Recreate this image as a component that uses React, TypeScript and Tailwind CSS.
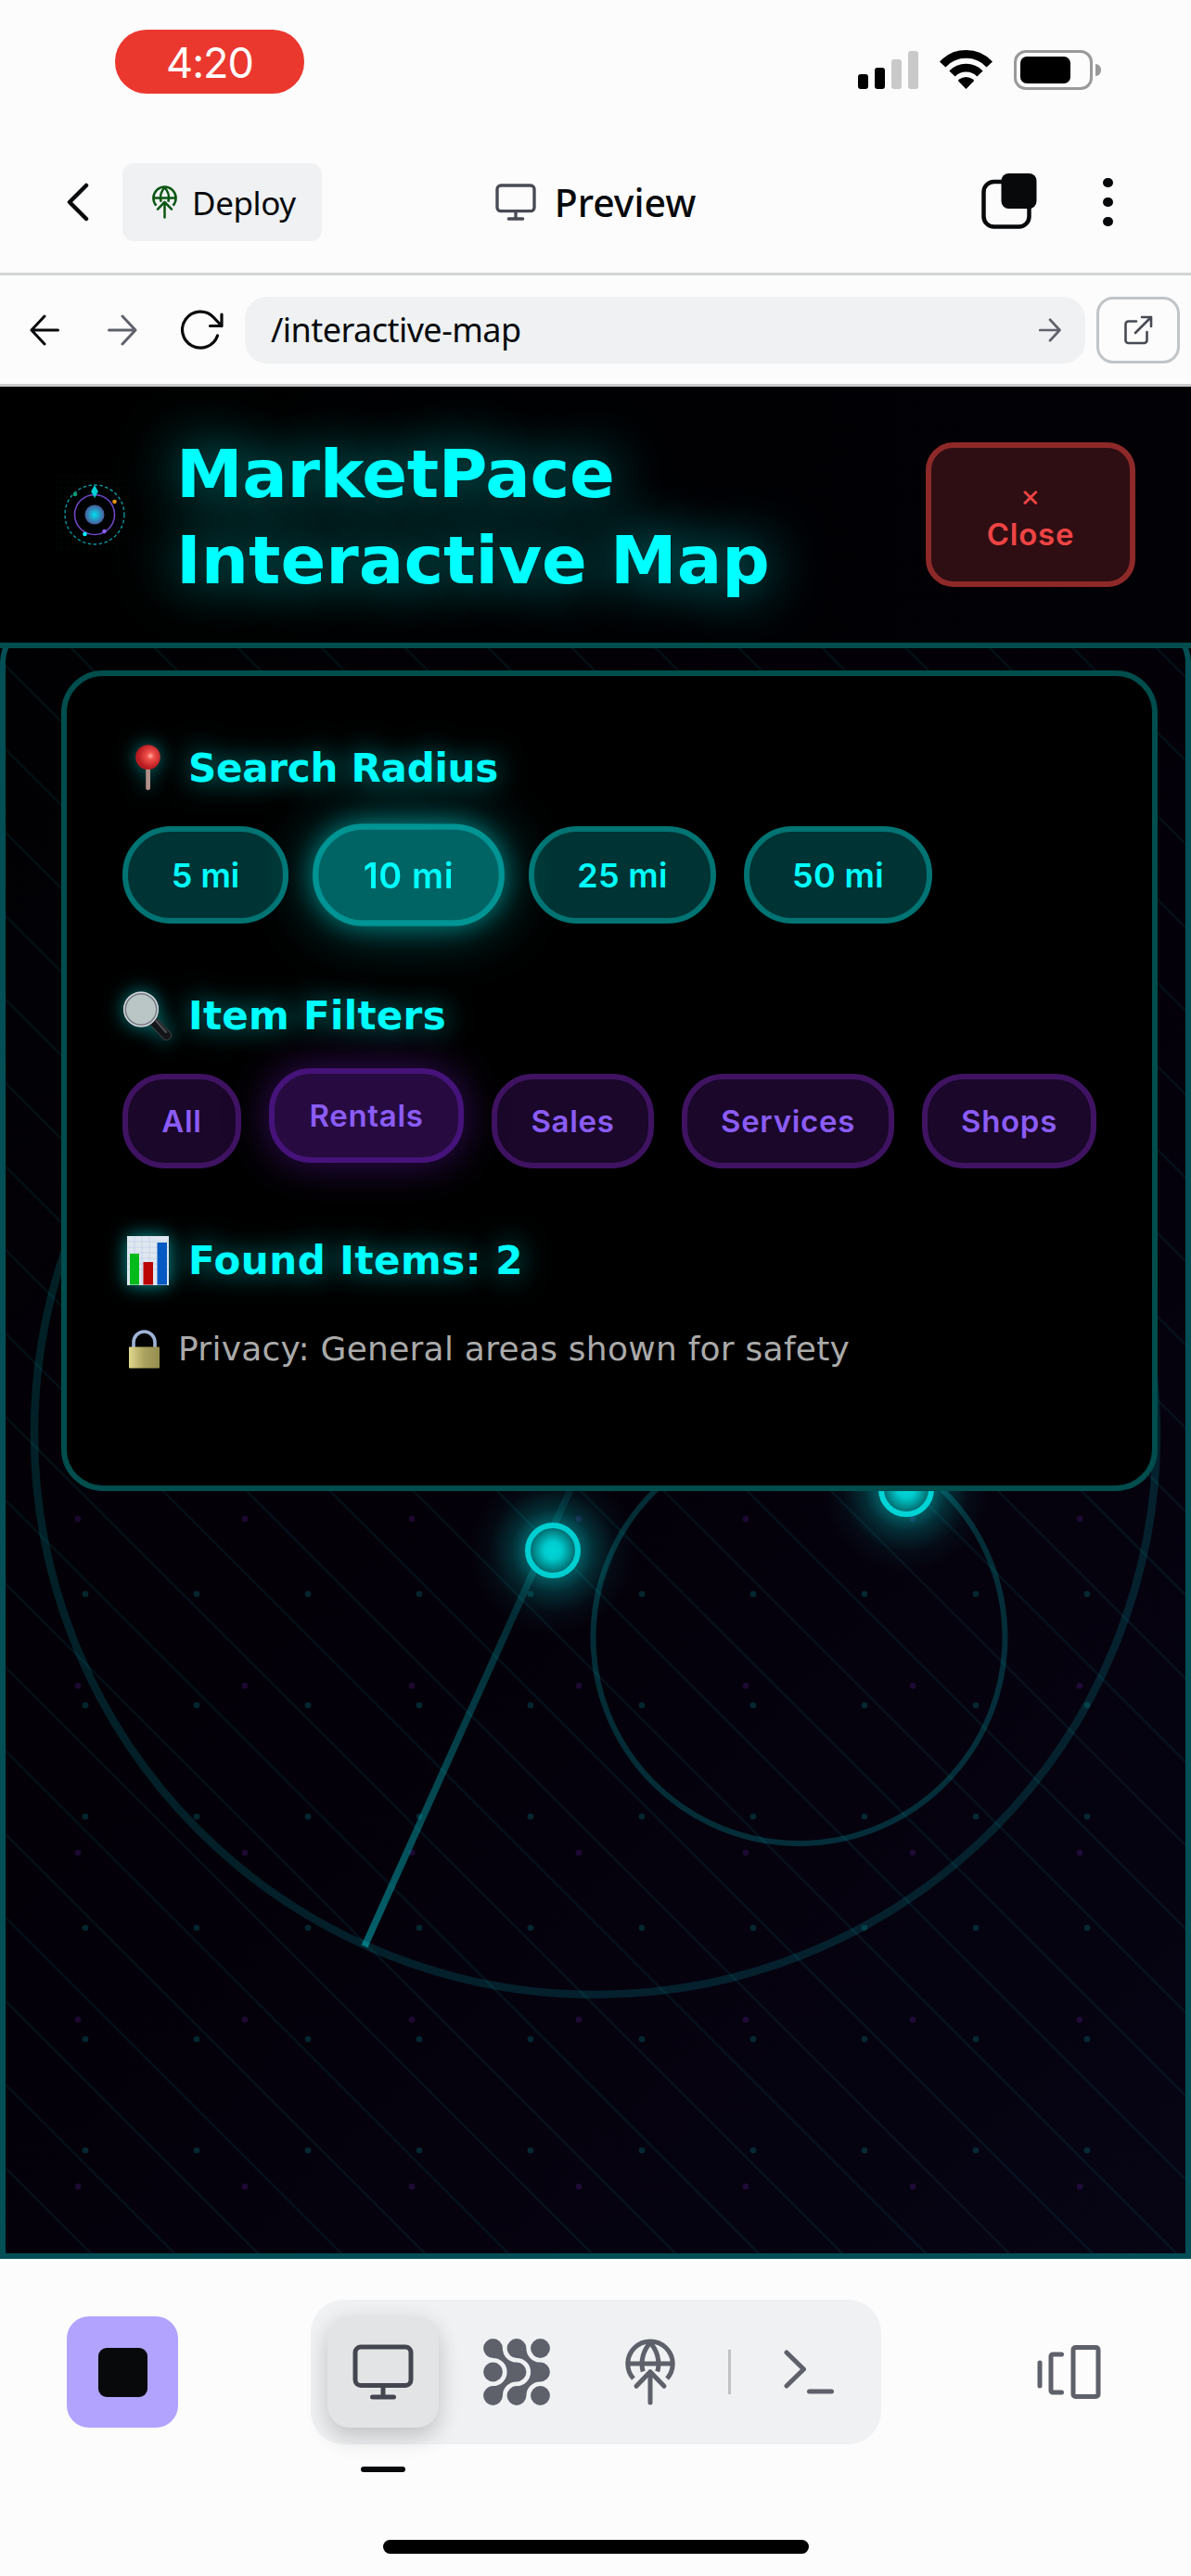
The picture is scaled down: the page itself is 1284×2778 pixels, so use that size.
function GlobeUp({ className }: { className: string }) {
  return (
    <svg viewBox="0 0 54 72" className={className} fill="none" stroke="currentColor" strokeWidth="5" strokeLinejoin="round">
      <path d="M8.9 43.2A24.2 24.2 0 1 1 45.1 43.2" />
      <path d="M3 27h48M19.2 35.5C16 24 20 12 27 4.5C34 12 38 24 34.8 35.5" />
      <path d="M12 51.3 27 35.7 42 51.3M27 36.5V69" strokeLinecap="round" />
    </svg>
  )
}

function Monitor({ className }: { className: string }) {
  return (
    <svg viewBox="0 0 66 60" className={className} fill="none" stroke="currentColor" strokeWidth="5" strokeLinecap="round">
      <rect x="3" y="3" width="60" height="41.5" rx="6" />
      <path d="M33 44.5v12M21.5 57h23" />
    </svg>
  )
}

function Arrow({ className }: { className: string }) {
  return (
    <svg viewBox="0 0 32 34" className={className} fill="none" stroke="currentColor" strokeLinecap="round" strokeLinejoin="round">
      <path d="M1.5 17H30M16 2 30 17 16 32" />
    </svg>
  )
}

function StatusBar() {
  return (
    <div className="flex h-[142px] items-start justify-between pl-[124px] pr-[97px]">
      <div className="mt-8 flex h-[69px] w-[204px] items-center justify-center rounded-[34px] bg-[#eb382f] text-[45px] tracking-[-1px] text-white">
        <span className="pt-0.5">4:20</span>
      </div>
      <div className="mt-[54px] flex items-end">
        <div className="flex items-end gap-[7px] pb-px">
          <div className="h-4 w-[11px] rounded-[3px] bg-black" />
          <div className="h-[23px] w-[11px] rounded-[3px] bg-black" />
          <div className="h-8 w-[11px] rounded-[3px] bg-[#c9c9c9]" />
          <div className="h-[41px] w-[11px] rounded-[3px] bg-[#c9c9c9]" />
        </div>
        <svg viewBox="0 0 57 43" className="ml-[23px] h-[43px] w-[57px]">
          <path d="M3.2 15.5A34.5 34.5 0 0 1 53.8 15.500M13.5 25.5A21 21 0 0 1 43.5 25.5" fill="none" stroke="black" strokeWidth="8.8" />
          <path d="M28.5 42 20 33.3Q20 32.3 21 31.6Q28.5 26.4 36 31.6Q37 32.3 37 33.3Z" />
        </svg>
        <div className="ml-[23px] flex h-[43px] w-[85px] items-center rounded-[13px] border-[3px] border-[#999] pl-1">
          <div className="h-[29px] w-[54px] rounded-[7px] bg-black" />
        </div>
        <div className="mb-[15px] ml-[3px] h-[13px] w-[6px] rounded-r-full bg-[#999]" />
      </div>
    </div>
  )
}

function TitleBar() {
  return (
    <div className="relative flex h-[155px] items-center border-b-[3px] border-[#d3d5d6] font-['Noto_Sans'] text-[#07090b]">
      <svg viewBox="0 0 24 42" className="ml-[72px] h-[42px] w-6" fill="none" stroke="currentColor" strokeWidth="4.5" strokeLinecap="round" strokeLinejoin="round">
        <path d="M21 3 3 21 21 39" />
      </svg>
      <div className="ml-9 flex h-[84px] w-[215px] items-center rounded-xl bg-[#eff1f3] pl-8">
        <GlobeUp className="h-9 w-[27px] text-[#0a5712]" />
        <span className="ml-4 text-[35px] leading-none tracking-[-0.4px]">Deploy</span>
      </div>
      <div className="absolute inset-x-0 flex items-center justify-center">
        <Monitor className="h-10 w-11 text-[#484a54]" />
        <span className="ml-5 text-[41px] font-medium leading-none">Preview</span>
      </div>
      <svg viewBox="0 0 60 60" className="mb-0.5 ml-auto mr-[71px] h-[60px] w-[60px]">
        <rect x="2.5" y="9" width="49" height="48.5" rx="11" fill="none" stroke="currentColor" strokeWidth="4.5" />
        <rect x="21.5" y="0" width="38" height="38" rx="8" fill="currentColor" />
      </svg>
      <div className="mr-[84px] flex flex-col gap-[10.4px]">
        <i className="size-[10.6px] rounded-full bg-current" />
        <i className="size-[10.6px] rounded-full bg-current" />
        <i className="size-[10.6px] rounded-full bg-current" />
      </div>
    </div>
  )
}

function AddressBar() {
  return (
    <div className="flex h-[120px] items-center border-b-[3px] border-[#c9cbcc] font-['Noto_Sans'] text-[#07090b]">
      <Arrow className="ml-8 h-[34px] w-8 rotate-180 stroke-[3]" />
      <Arrow className="ml-[52px] h-[34px] w-8 stroke-[3] text-[#5f626b]" />
      <svg viewBox="0 0 48 44" className="ml-[47px] h-11 w-12" fill="none" stroke="currentColor" strokeWidth="3.2" strokeLinecap="round" strokeLinejoin="round">
        <path d="M39.5 28A19.5 19.5 0 1 1 35 8L44 17.500M44 5V17.5H31.5" />
      </svg>
      <div className="ml-[21px] flex h-[72px] w-[906px] items-center justify-between rounded-3xl bg-[#eff1f3] pl-7 pr-[26px]">
        <span className="text-[36px] leading-none tracking-[-0.55px]">/interactive-map</span>
        <Arrow className="h-[26px] w-6 stroke-[3.5] text-[#5f626b]" />
      </div>
      <div className="ml-3 flex h-[72px] w-[90px] items-center justify-center rounded-[18px] border-[3px] border-[#c0c5c7]">
        <svg viewBox="0 0 32 32" className="h-8 w-8" fill="none" stroke="#484a54" strokeWidth="2.6" strokeLinecap="round" strokeLinejoin="round">
          <path d="M14 6.5H5.5A3 3 0 0 0 2.5 9.5V27A3 3 0 0 0 5.5 30H22.5A3 3 0 0 0 25.5 27V18M20 2H30V12M30 2 13 19" />
        </svg>
      </div>
    </div>
  )
}

function AppHeader() {
  return (
    <header className="relative z-10 flex h-[282px] items-center border-b-[6px] border-[#004d4d] bg-[linear-gradient(90deg,#000,#020106)]">
      <svg viewBox="0 0 84 84" className="ml-[60px] h-[84px] w-[84px] shrink-0">
        <defs>
          <radialGradient id="core">
            <stop offset="0" stopColor="#00e0f0" />
            <stop offset="1" stopColor="#4a5a9a" />
          </radialGradient>
          <pattern id="logoGrid" width="6" height="6" patternUnits="userSpaceOnUse">
            <path d="M0 0H6M0 0V6" stroke="#020807" strokeWidth="1" />
          </pattern>
        </defs>
        <rect width="84" height="84" fill="url(#logoGrid)" />
        <circle cx="42" cy="42" r="32" fill="none" stroke="#0aa0a8" strokeWidth="1.3" strokeDasharray="3.5 2.5" />
        <circle cx="42" cy="42" r="21.5" fill="none" stroke="#6f46c4" strokeWidth="1.6" />
        <circle cx="42" cy="42" r="10.5" fill="url(#core)" />
        <path d="M42 10 45.8 17 42 24 38.2 17Z" fill="#00cfd6" />
        <circle cx="21" cy="20" r="2.3" fill="#0f9a70" />
        <circle cx="63.5" cy="28" r="2.3" fill="#e8940f" />
        <circle cx="31.5" cy="63" r="2.3" fill="#00f0ff" />
        <circle cx="52.5" cy="60" r="2.3" fill="#8b5cf6" />
      </svg>
      <h1 className="ml-[46px] w-[700px] pt-1.5 font-['DejaVu_Sans'] text-[72px] font-bold leading-[93px] text-[#0ff] [text-shadow:0_0_60px_rgba(0,255,255,0.65)]">
        <span className="tracking-[-0.35px]">MarketPace</span>
        <br />
        <span>Interactive Map</span>
      </h1>
      <button className="ml-auto mr-[60px] flex h-[156px] w-[226px] flex-col items-center justify-center rounded-[30px] border-[6px] border-[#8e2929] bg-[#2e0e12] text-[33px] font-semibold leading-[40px] tracking-[0.8px] text-[#ef4444]">
        <span className="font-normal">×</span>
        <span className="pt-0.5">Close</span>
      </button>
    </header>
  )
}

function Pushpin() {
  return (
    <svg viewBox="0 0 54 60" className="h-[60px] w-[54px] overflow-visible drop-shadow-[0_0_10px_rgba(0,255,255,0.5)]">
      <defs>
        <radialGradient id="pin" cx=".6" cy=".45">
          <stop offset="0" stopColor="#ffb0a0" />
          <stop offset=".3" stopColor="#f0504a" />
          <stop offset="1" stopColor="#b81a20" />
        </radialGradient>
      </defs>
      <rect x="25.2" y="26" width="4.8" height="28" rx="2" fill="#b09088" />
      <circle cx="27.5" cy="18.5" r="13.3" fill="url(#pin)" />
    </svg>
  )
}

function Magnifier() {
  return (
    <svg viewBox="0 0 54 60" className="h-[60px] w-[54px] overflow-visible drop-shadow-[0_0_10px_rgba(0,255,255,0.5)]">
      <path d="M34 37 47.5 51.5" stroke="#3c4043" strokeWidth="11" strokeLinecap="round" />
      <path d="M34 37 47.5 51.5" stroke="#121416" strokeWidth="9" strokeLinecap="round" />
      <path d="M36.5 36 47 48" stroke="#4a4e52" strokeWidth="2.5" strokeLinecap="round" />
      <circle cx="20" cy="23.500" r="17.5" fill="#b9c6c5" stroke="#777c84" strokeWidth="3" />
      <circle cx="20" cy="23.5" r="18.3" fill="none" stroke="#d5dbe2" strokeWidth="1.4" />
    </svg>
  )
}

function BarChart() {
  return (
    <svg viewBox="0 0 54 60" className="h-[60px] w-[54px] overflow-visible drop-shadow-[0_0_10px_rgba(0,255,255,0.6)]">
      <rect x="5" y="4" width="45" height="53" fill="#dfe7f0" />
      <path d="M5 10H50M5 16H50M5 22H50M5 28H50M5 34H50M5 40H50M13 4V57M21 4V57M29 4V57" stroke="#c3d2e4" strokeWidth=".8" />
      <rect x="8" y="23" width="10" height="33.5" fill="#05bb1c" />
      <rect x="22.5" y="32" width="10.5" height="24.5" fill="#bb0404" />
      <rect x="37.5" y="11" width="10.5" height="45.5" fill="#0559c2" />
    </svg>
  )
}

function Padlock() {
  return (
    <svg viewBox="0 0 46 54" className="h-[54px] w-[46px]">
      <defs>
        <linearGradient id="lock">
          <stop offset="0" stopColor="#e0d88c" />
          <stop offset=".5" stopColor="#aaa25e" />
          <stop offset="1" stopColor="#958d50" />
        </linearGradient>
      </defs>
      <path d="M12 26V19.5A11.5 11.5 0 0 1 35 19.5V26" fill="none" stroke="#9fb3d8" strokeWidth="3.6" />
      <rect x="7" y="24.5" width="33" height="23" rx="1" fill="url(#lock)" />
    </svg>
  )
}

const heading =
  "flex h-[60px] items-center font-['DejaVu_Sans'] text-[42px] font-bold leading-[60px] text-[#0ff] [text-shadow:0_0_30px_rgba(0,255,255,0.6)]"
const radiusPill =
  'flex h-[105px] items-center justify-center rounded-[52px] border-[6px] text-[36px] font-semibold text-[#0ff]'
const filterPill =
  'flex h-[102px] items-center justify-center rounded-[45px] border-[6px] pt-0.5 text-[33px] font-semibold tracking-[0.7px] text-[#8b5cf6]'

function ControlPanel() {
  const idle = 'border-[#007373] bg-[#003333]'
  const idleFilter = 'border-[#3f1361] bg-[#1a0729]'
  return (
    <section className="absolute left-[66px] top-[24px] h-[885px] w-[1182px] rounded-[45px] border-[6px] border-[#004d4d] bg-black px-[60px] pt-[69px]">
      <h2 className={heading}>
        <Pushpin />
        <span className="ml-[17px] pt-0.5 tracking-[-0.25px]">Search Radius</span>
      </h2>
      <div className="mt-[33px] flex">
        <button className={`${radiusPill} ${idle} w-[179px]`}>5 mi</button>
        <button className={`${radiusPill} ml-[31px] w-[197px] scale-105 border-[#009494] bg-[#006464] tracking-[0.6px] shadow-[0_0_60px_rgba(0,255,255,0.4),0_0_24px_rgba(0,255,255,0.35)]`}>10 mi</button>
        <button className={`${radiusPill} ${idle} ml-[31px] w-[202px] tracking-[0.3px]`}>25 mi</button>
        <button className={`${radiusPill} ${idle} ml-[30px] w-[203px] tracking-[0.3px]`}>50 mi</button>
      </div>
      <h2 className={`${heading} mt-[69px]`}>
        <Magnifier />
        <span className="ml-[17px] pt-0.5 tracking-[0.3px]">Item Filters</span>
      </h2>
      <div className="mt-[33px] flex gap-[30px]">
        <button className={`${filterPill} ${idleFilter} w-32`}>All</button>
        <button className={`${filterPill} w-[210px] -translate-y-1.5 border-[#45137a] bg-[#270b40] shadow-[0_0_45px_rgba(110,30,190,0.5)]`}>Rentals</button>
        <button className={`${filterPill} ${idleFilter} w-[175px]`}>Sales</button>
        <button className={`${filterPill} ${idleFilter} w-[229px]`}>Services</button>
        <button className={`${filterPill} ${idleFilter} w-[188px]`}>Shops</button>
      </div>
      <h2 className={`${heading} mt-[69px]`}>
        <BarChart />
        <span className="ml-[17px] pt-0.5 tracking-[0.5px]">Found Items: 2</span>
      </h2>
      <p className="mt-[39px] flex h-[54px] items-center font-['DejaVu_Sans'] text-[36px] text-[#aaa]">
        <Padlock />
        <span className="ml-[14px] tracking-[0.25px]">Privacy: General areas shown for safety</span>
      </p>
    </section>
  )
}

function RadarMap() {
  return (
    <main className="relative h-[1737px] overflow-hidden bg-[#020006]">
      <div className="absolute inset-x-0 -top-[29px] bottom-0 overflow-hidden rounded-t-[45px] border-[6px] border-[#034f55] bg-[linear-gradient(135deg,#010103,#040009_50%,#070414)]" />
      <svg viewBox="0 699 1284 1737" className="absolute inset-0 h-[1737px] w-[1284px]">
        <defs>
          <clipPath id="frame"><rect x="6" y="699" width="1272" height="1731" /></clipPath>
          <pattern id="diagonals" x="8" y="0" width="90" height="90" patternUnits="userSpaceOnUse">
            <path d="M-5 -5 95 95M85 -5 95 5M-5 85 5 95" stroke="#00ffff" strokeOpacity=".06" strokeWidth="2.6" />
          </pattern>
          <pattern id="cyanDots" x="32" y="1659" width="120" height="120" patternUnits="userSpaceOnUse">
            <circle cx="60" cy="60" r="3.3" fill="#00ffff" fillOpacity=".15" />
          </pattern>
          <pattern id="violetDots" x="-6" y="1548" width="180" height="180" patternUnits="userSpaceOnUse">
            <circle cx="90" cy="90" r="3.3" fill="#8a2be2" fillOpacity=".18" />
          </pattern>
          <linearGradient id="sweep" gradientUnits="userSpaceOnUse" x1="642" y1="1546" x2="393" y2="2099">
            <stop offset="0" stopColor="#00d8e0" stopOpacity=".05" />
            <stop offset="1" stopColor="#00d8e0" stopOpacity=".45" />
          </linearGradient>
          <radialGradient id="marker">
            <stop offset="0" stopColor="#00d6d8" />
            <stop offset=".35" stopColor="#00cbcd" />
            <stop offset="1" stopColor="#005a5e" />
          </radialGradient>
          <radialGradient id="glow">
            <stop offset=".25" stopColor="#00ffff" stopOpacity=".42" />
            <stop offset=".5" stopColor="#00ffff" stopOpacity=".17" />
            <stop offset=".75" stopColor="#00ffff" stopOpacity=".04" />
            <stop offset="1" stopColor="#00ffff" stopOpacity="0" />
          </radialGradient>
        </defs>
        <g clipPath="url(#frame)">
          <rect y="699" width="1284" height="1737" fill="url(#diagonals)" />
          <rect y="1600" width="1284" height="836" fill="url(#cyanDots)" />
          <rect y="1600" width="1284" height="836" fill="url(#violetDots)" />
          <circle cx="642" cy="1546" r="605" fill="none" stroke="#00e0e8" strokeOpacity=".14" strokeWidth="8.5" />
          <circle cx="861.5" cy="1766" r="222" fill="none" stroke="#00e0e8" strokeOpacity=".2" strokeWidth="6" />
          <path d="M642 1546 393 2099" stroke="url(#sweep)" strokeWidth="7.5" />
          <circle cx="596" cy="1672" r="90" fill="url(#glow)" />
          <circle cx="596" cy="1672" r="27" fill="url(#marker)" stroke="#00cfd1" strokeWidth="6" />
          <circle cx="977" cy="1606" r="90" fill="url(#glow)" />
          <circle cx="977" cy="1606" r="27" fill="url(#marker)" stroke="#00d4d6" strokeWidth="6" />
        </g>
      </svg>
      <ControlPanel />
    </main>
  )
}

function BottomBar() {
  return (
    <footer className="relative flex h-[342px] items-start pt-11 text-[#5e616a]">
      <button className="ml-[72px] mt-[18px] flex size-[120px] items-center justify-center rounded-3xl bg-[#b1a3ff]">
        <span className="size-[53px] rounded-[9px] bg-[#07090b]" />
      </button>
      <nav className="ml-[143px] flex h-[156px] w-[615px] items-center rounded-[36px] bg-[#eff1f3] px-[18px]">
        <div className="relative flex size-[120px] items-center justify-center rounded-3xl bg-[#e3e4e6] text-[#44464f] shadow-[0_12px_24px_rgba(0,0,0,0.16),0_0_24px_rgba(0,0,0,0.05)]">
          <Monitor className="h-[60px] w-[66px]" />
          <span className="absolute -bottom-12 h-1.5 w-12 rounded-full bg-[#07090b]" />
        </div>
        <div className="ml-6 flex size-[120px] items-center justify-center">
          <svg viewBox="0 0 72 72" className="size-[72px]" fill="currentColor">
            <path d="M10.5 .1A10.4 10.4 0 0 1 20.9 10.5A15.1 15.1 0 0 0 36 25.6A10.4 10.4 0 0 1 36 46.4A15.1 15.1 0 0 0 20.9 61.5A10.4 10.4 0 1 1 10.5 51.1A15.1 15.1 0 0 0 25.6 36A15.1 15.1 0 0 0 10.5 20.9A10.4 10.4 0 0 1 10.5 .1Z" />
            <path transform="translate(25.5)" d="M10.5 .1A10.4 10.4 0 0 1 20.9 10.5A15.1 15.1 0 0 0 36 25.6A10.4 10.4 0 0 1 36 46.4A15.1 15.1 0 0 0 20.9 61.5A10.4 10.4 0 1 1 10.5 51.1A15.1 15.1 0 0 0 25.6 36A15.1 15.1 0 0 0 10.5 20.9A10.4 10.4 0 0 1 10.5 .1Z" />
            <circle cx="10.5" cy="36" r="10.4" />
            <circle cx="61.5" cy="10.5" r="10.4" />
            <circle cx="61.5" cy="61.5" r="10.4" />
          </svg>
        </div>
        <div className="ml-6 flex size-[120px] items-center justify-center">
          <GlobeUp className="h-[72px] w-[54px]" />
        </div>
        <span className="ml-6 h-12 w-[3px] bg-[#bfc1c4]" />
        <div className="ml-6 flex size-[120px] items-center justify-center">
          <svg viewBox="0 0 54 48" className="h-12 w-[54px]" fill="none" stroke="currentColor" strokeWidth="5" strokeLinecap="round" strokeLinejoin="round">
            <path d="M3 3 21.5 21 3 39M27.5 45H51.5" />
          </svg>
        </div>
      </nav>
      <svg viewBox="0 0 70 60" className="ml-[167px] mt-12 h-[60px] w-[70px]" fill="none" stroke="currentColor" strokeWidth="5" strokeLinecap="round" strokeLinejoin="round">
        <path d="M4 20V45M27.5 11H18A2 2 0 0 0 16 13V50A2 2 0 0 0 18 52H27.5" />
        <rect x="40" y="3.5" width="27" height="53" rx="2.5" />
      </svg>
      <div className="absolute bottom-6 left-[413px] h-[15px] w-[459px] rounded-full bg-black" />
    </footer>
  )
}

export default function App() {
  return (
    <div className="min-h-[2778px] w-[1284px] bg-[#fcfcfc] font-['Inter',sans-serif]">
      <StatusBar />
      <TitleBar />
      <AddressBar />
      <AppHeader />
      <RadarMap />
      <BottomBar />
    </div>
  )
}
